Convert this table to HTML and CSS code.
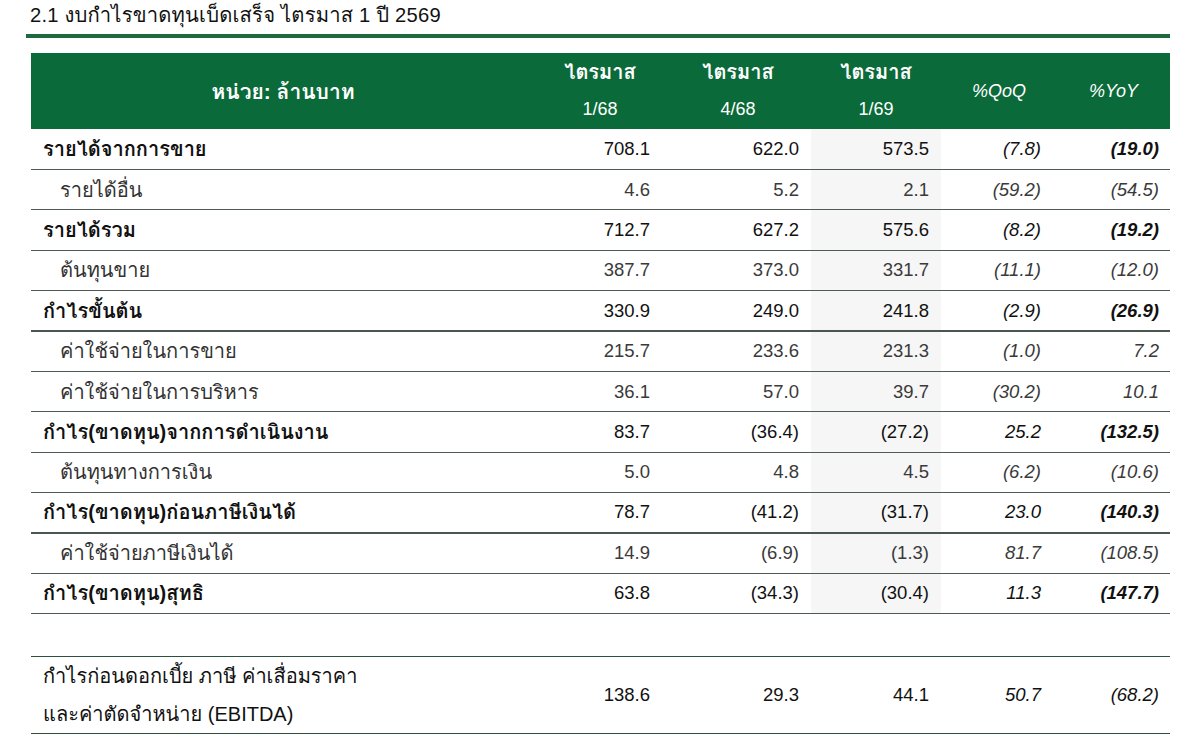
FILE: index.html
```html
<!DOCTYPE html>
<html lang="th">
<head>
<meta charset="utf-8">
<title>งบกำไรขาดทุนเบ็ดเสร็จ</title>
<link rel="stylesheet" href="styles.css">
</head>
<body>
<div class="page">
  <h1 class="title">2.1 งบกำไรขาดทุนเบ็ดเสร็จ ไตรมาส 1 ปี 2569</h1>
  <div class="rule"></div>
  <table class="fin">
    <colgroup>
      <col class="c-label">
      <col class="c-q1">
      <col class="c-q2">
      <col class="c-q3">
      <col class="c-qoq">
      <col class="c-yoy">
    </colgroup>
    <thead>
      <tr>
        <th class="h-label">หน่วย: ล้านบาท</th>
        <th class="h-q"><span class="th-thai">ไตรมาส</span><span>1/68</span></th>
        <th class="h-q"><span class="th-thai">ไตรมาส</span><span>4/68</span></th>
        <th class="h-q"><span class="th-thai">ไตรมาส</span><span>1/69</span></th>
        <th class="h-pct">%QoQ</th>
        <th class="h-pct">%YoY</th>
      </tr>
    </thead>
    <tbody>
      <tr class="main">
        <td class="lbl">รายได้จากการขาย</td><td>708.1</td><td>622.0</td><td class="shade">573.5</td><td class="pct">(7.8)</td><td class="pct yoy">(19.0)</td>
      </tr>
      <tr class="sub">
        <td class="lbl">รายได้อื่น</td><td>4.6</td><td>5.2</td><td class="shade">2.1</td><td class="pct">(59.2)</td><td class="pct">(54.5)</td>
      </tr>
      <tr class="main">
        <td class="lbl">รายได้รวม</td><td>712.7</td><td>627.2</td><td class="shade">575.6</td><td class="pct">(8.2)</td><td class="pct yoy">(19.2)</td>
      </tr>
      <tr class="sub">
        <td class="lbl">ต้นทุนขาย</td><td>387.7</td><td>373.0</td><td class="shade">331.7</td><td class="pct">(11.1)</td><td class="pct">(12.0)</td>
      </tr>
      <tr class="main thick">
        <td class="lbl">กำไรขั้นต้น</td><td>330.9</td><td>249.0</td><td class="shade">241.8</td><td class="pct">(2.9)</td><td class="pct yoy">(26.9)</td>
      </tr>
      <tr class="sub">
        <td class="lbl">ค่าใช้จ่ายในการขาย</td><td>215.7</td><td>233.6</td><td class="shade">231.3</td><td class="pct">(1.0)</td><td class="pct">7.2</td>
      </tr>
      <tr class="sub">
        <td class="lbl">ค่าใช้จ่ายในการบริหาร</td><td>36.1</td><td>57.0</td><td class="shade">39.7</td><td class="pct">(30.2)</td><td class="pct">10.1</td>
      </tr>
      <tr class="main">
        <td class="lbl">กำไร(ขาดทุน)จากการดำเนินงาน</td><td>83.7</td><td>(36.4)</td><td class="shade">(27.2)</td><td class="pct">25.2</td><td class="pct yoy">(132.5)</td>
      </tr>
      <tr class="sub">
        <td class="lbl">ต้นทุนทางการเงิน</td><td>5.0</td><td>4.8</td><td class="shade">4.5</td><td class="pct">(6.2)</td><td class="pct">(10.6)</td>
      </tr>
      <tr class="main thick">
        <td class="lbl">กำไร(ขาดทุน)ก่อนภาษีเงินได้</td><td>78.7</td><td>(41.2)</td><td class="shade">(31.7)</td><td class="pct">23.0</td><td class="pct yoy">(140.3)</td>
      </tr>
      <tr class="sub">
        <td class="lbl">ค่าใช้จ่ายภาษีเงินได้</td><td>14.9</td><td>(6.9)</td><td class="shade">(1.3)</td><td class="pct">81.7</td><td class="pct">(108.5)</td>
      </tr>
      <tr class="main">
        <td class="lbl">กำไร(ขาดทุน)สุทธิ</td><td>63.8</td><td>(34.3)</td><td class="shade">(30.4)</td><td class="pct">11.3</td><td class="pct yoy">(147.7)</td>
      </tr>
      <tr class="spacer">
        <td colspan="6"></td>
      </tr>
      <tr class="ebitda">
        <td class="lbl">กำไรก่อนดอกเบี้ย ภาษี ค่าเสื่อมราคา<br>และค่าตัดจำหน่าย (EBITDA)</td><td>138.6</td><td>29.3</td><td>44.1</td><td class="pct">50.7</td><td class="pct">(68.2)</td>
      </tr>
    </tbody>
  </table>
</div>
</body>
</html>
```

FILE: styles.css
```css
* { box-sizing: border-box; }

html, body {
  margin: 0;
  padding: 0;
  background: #ffffff;
}

body {
  font-family: "Liberation Sans", Arial, Tahoma, Loma, Garuda, "Noto Sans Thai Looped", "Noto Serif Thai", "Noto Sans Thai", sans-serif;
  color: #111;
}

.page {
  width: 1200px;
  height: 745px;
  overflow: hidden;
  padding: 3px 0 0 26px;
}

.title {
  margin: 0 0 0 4px;
  font-size: 20.2px;
  font-weight: normal;
  line-height: 24px;
  color: #111;
  letter-spacing: 0.2px;
}

.rule {
  margin-top: 7px;
  width: 1144px;
  height: 4px;
  background: #1c6b3f;
}

.fin {
  margin: 15px 0 0 5px;
  width: 1139px;
  border-collapse: collapse;
  table-layout: fixed;
}

.c-label { width: 504px; }
.c-q1 { width: 130px; }
.c-q2 { width: 146px; }
.c-q3 { width: 130px; }
.c-qoq { width: 116px; }
.c-yoy { width: 113px; }

.fin thead tr {
  background: #0b6a39;
  height: 76px;
}

.fin th {
  color: #fff;
  font-size: 18px;
  padding: 0;
  vertical-align: middle;
  text-align: center;
}

.fin th.h-label {
  font-weight: bold;
  font-size: 21px;
  padding-top: 1px;
}

.fin th.h-q {
  font-weight: normal;
}

.h-q span {
  display: block;
  line-height: 37px;
}

.h-q .th-thai {
  font-weight: bold;
  font-size: 20px;
}

.fin th.h-pct {
  font-weight: normal;
  font-style: italic;
}

.fin td {
  font-size: 18.5px;
  text-align: right;
  padding: 0 12px 0 0;
  height: 40.4px;
  border-bottom: 1px solid #4f5a54;
  vertical-align: middle;
  white-space: nowrap;
}

.fin td:nth-child(2) { padding-right: 15px; }
.fin td.pct { padding-right: 16px; font-style: italic; }
.fin td:nth-child(6) { padding-right: 11px; }

.fin td.lbl {
  text-align: left;
  padding: 0 0 0 12px;
  font-size: 20px;
}

.main td { color: #111; }
.main td.lbl { font-weight: bold; }
.main td.yoy { font-weight: bold; }

.sub td { color: #3a3a3a; }
.sub td.lbl { padding-left: 29px; color: #333; }

.thick td { border-bottom: 2px solid #4a5650; }

.shade { background: #f6f6f6; }

.spacer td {
  height: 43px;
  border-bottom: 1px solid #2d4f3e;
}

.ebitda td {
  height: 76px;
  border-bottom: 1px solid #2d4f3e;
  color: #111;
}

.ebitda td.lbl {
  line-height: 38px;
  font-weight: normal;
}
```
